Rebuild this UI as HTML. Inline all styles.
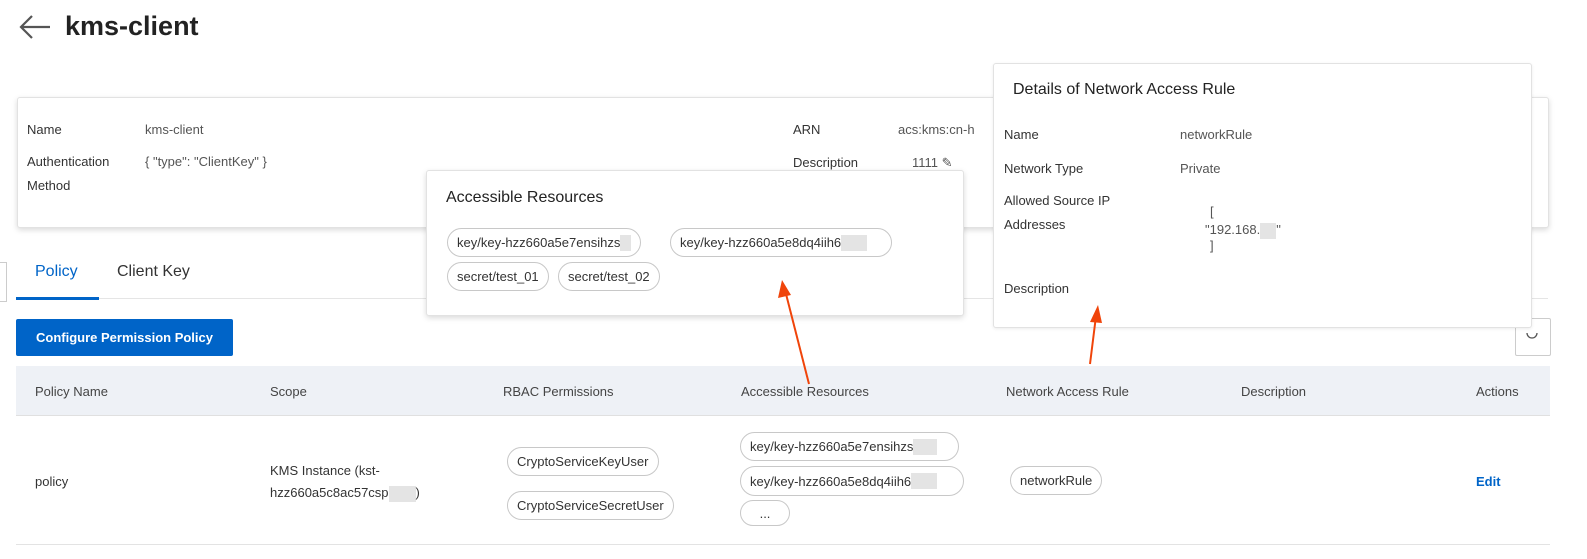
<!DOCTYPE html>
<html><head><meta charset="utf-8"><style>
*{margin:0;padding:0;box-sizing:border-box}
body{width:1587px;height:559px;background:#fff;position:relative;overflow:hidden;font-family:"Liberation Sans",sans-serif;font-size:13px;color:#333}
.a{position:absolute;white-space:nowrap}
.l{color:#333}
.v{color:#555}
.tag{position:absolute;border:1px solid #c8c8c8;border-radius:15px;background:#fff;color:#333;font-size:13px;padding:0 9px;display:flex;align-items:center;white-space:nowrap;overflow:hidden}
.blur{display:inline-block;background:#e4e4e4;height:16px;vertical-align:middle}
.card{position:absolute;background:#fff;border:1px solid #e2e2e2;border-radius:3px;box-shadow:0 2px 6px rgba(0,0,0,.15)}
.th{position:absolute;top:384px;color:#444}
</style></head><body>
<svg class="a" style="left:18px;top:14px" width="34" height="26" viewBox="0 0 34 26"><path d="M32 13H3M14 2L3 13l11 11" fill="none" stroke="#555" stroke-width="2.2"/></svg>
<div class="a" style="left:65px;top:11px;font-size:27px;font-weight:bold;color:#222">kms-client</div>

<div class="card" style="left:17px;top:97px;width:1532px;height:131px"></div>
<div class="a l" style="left:27px;top:122px">Name</div>
<div class="a v" style="left:145px;top:122px">kms-client</div>
<div class="a l" style="left:27px;top:154px">Authentication</div>
<div class="a v" style="left:145px;top:154px">{ "type": "ClientKey" }</div>
<div class="a l" style="left:27px;top:178px">Method</div>
<div class="a l" style="left:793px;top:122px">ARN</div>
<div class="a v" style="left:898px;top:122px">acs:kms:cn-h</div>
<div class="a l" style="left:793px;top:155px">Description</div>
<div class="a v" style="left:912px;top:155px">1111 ✎</div>

<div class="a" style="left:0;top:262px;width:7px;height:40px;border:1px solid #ccc;border-left:none"></div>
<div class="a" style="left:35px;top:263px;font-size:16px;color:#0064c8">Policy</div>
<div class="a" style="left:117px;top:263px;font-size:16px;color:#333">Client Key</div>
<div class="a" style="left:16px;top:298px;width:1532px;height:1px;background:#e5e5e5"></div>
<div class="a" style="left:16px;top:297px;width:83px;height:3px;background:#0064c8"></div>

<div class="a" style="left:16px;top:319px;width:217px;height:37px;background:#0064c8;border-radius:2px;color:#fff;font-weight:bold;display:flex;align-items:center;justify-content:center">Configure Permission Policy</div>
<div class="a" style="left:1515px;top:318px;width:36px;height:38px;border:1px solid #ccc;border-radius:2px"></div>
<svg class="a" style="left:1525px;top:331px" width="14" height="12"><path d="M2 2A5 5 0 1 0 12 2" fill="none" stroke="#555" stroke-width="1.3"/></svg>

<div class="a" style="left:16px;top:366px;width:1534px;height:50px;background:#eef1f6;border-bottom:1px solid #e0e0e0"></div>
<div class="th" style="left:35px">Policy Name</div>
<div class="th" style="left:270px">Scope</div>
<div class="th" style="left:503px">RBAC Permissions</div>
<div class="th" style="left:741px">Accessible Resources</div>
<div class="th" style="left:1006px">Network Access Rule</div>
<div class="th" style="left:1241px">Description</div>
<div class="th" style="left:1476px">Actions</div>
<div class="a" style="left:16px;top:544px;width:1534px;height:1px;background:#e3e3e3"></div>

<div class="a" style="left:35px;top:474px">policy</div>
<div class="a" style="left:270px;top:463px">KMS Instance (kst-</div>
<div class="a" style="left:270px;top:485px">hzz660a5c8ac57csp<span class="blur" style="width:27px"></span>)</div>
<div class="tag" style="left:507px;top:447px;height:29px">CryptoServiceKeyUser</div>
<div class="tag" style="left:507px;top:491px;height:29px">CryptoServiceSecretUser</div>
<div class="tag" style="left:740px;top:432px;height:29px;width:219px">key/key-hzz660a5e7ensihzs<span class="blur" style="width:24px"></span></div>
<div class="tag" style="left:740px;top:466px;height:30px;width:224px">key/key-hzz660a5e8dq4iih6<span class="blur" style="width:26px"></span></div>
<div class="tag" style="left:740px;top:500px;height:26px;width:50px;justify-content:center">...</div>
<div class="tag" style="left:1010px;top:466px;height:29px">networkRule</div>
<div class="a" style="left:1476px;top:474px;color:#0064c8;font-weight:bold">Edit</div>

<div class="card" style="left:426px;top:170px;width:538px;height:146px"></div>
<div class="a" style="left:446px;top:189px;font-size:16px;color:#222">Accessible Resources</div>
<div class="tag" style="left:447px;top:228px;height:29px;width:194px">key/key-hzz660a5e7ensihzs<span class="blur" style="width:26px"></span></div>
<div class="tag" style="left:670px;top:228px;height:29px;width:222px">key/key-hzz660a5e8dq4iih6<span class="blur" style="width:26px"></span></div>
<div class="tag" style="left:447px;top:262px;height:29px">secret/test_01</div>
<div class="tag" style="left:558px;top:262px;height:29px">secret/test_02</div>

<div class="card" style="left:993px;top:63px;width:539px;height:265px;box-shadow:0 1px 3px rgba(0,0,0,.08)"></div>
<div class="a" style="left:1013px;top:81px;font-size:16px;color:#222">Details of Network Access Rule</div>
<div class="a l" style="left:1004px;top:127px">Name</div>
<div class="a v" style="left:1180px;top:127px">networkRule</div>
<div class="a l" style="left:1004px;top:161px">Network Type</div>
<div class="a v" style="left:1180px;top:161px">Private</div>
<div class="a l" style="left:1004px;top:193px">Allowed Source IP</div>
<div class="a l" style="left:1004px;top:217px">Addresses</div>
<div class="a v" style="left:1210px;top:204px">[</div>
<div class="a v" style="left:1205px;top:222px">"192.168.<span class="blur" style="width:16px"></span>"</div>
<div class="a v" style="left:1210px;top:238px">]</div>
<div class="a l" style="left:1004px;top:281px">Description</div>

<svg class="a" style="left:0;top:0" width="1587" height="559">
<path d="M809 384L785 290" stroke="#f0440a" stroke-width="2" fill="none"/>
<path d="M782 280L778 298L791 295Z" fill="#f0440a"/>
<path d="M1090 364L1096 316" stroke="#f0440a" stroke-width="2" fill="none"/>
<path d="M1098 305L1090 322L1102 323Z" fill="#f0440a"/>
</svg>
</body></html>
